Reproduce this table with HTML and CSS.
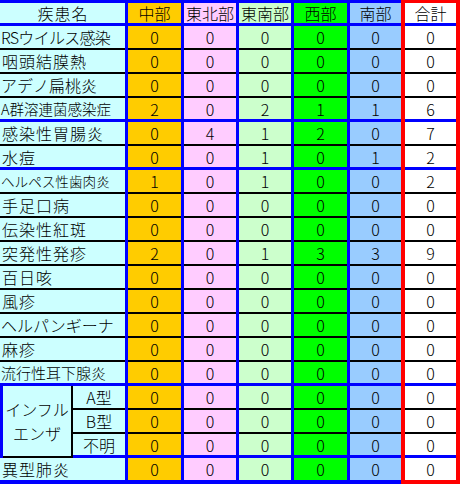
FILE: index.html
```html
<!DOCTYPE html>
<html lang="ja">
<head>
<meta charset="utf-8">
<title>感染症発生状況</title>
<link rel="stylesheet" href="styles.css">
</head>
<body>
<table class="grid">
  <colgroup>
    <col class="w-a"><col class="w-b"><col class="w-c1"><col class="w-c2"><col class="w-c3"><col class="w-c4"><col class="w-c5"><col class="w-tot">
  </colgroup>
  <thead>
    <tr>
      <th class="name head-name" colspan="2">疾患名</th>
      <th class="c1">中部</th><th class="c2">東北部</th><th class="c3">東南部</th><th class="c4">西部</th><th class="c5">南部</th><th class="tot">合計</th>
    </tr>
  </thead>
  <tbody>
    <tr><td class="name tight" colspan="2">RSウイルス感染</td><td class="c1">0</td><td class="c2">0</td><td class="c3">0</td><td class="c4">0</td><td class="c5">0</td><td class="tot">0</td></tr>
    <tr><td class="name wide" colspan="2">咽頭結膜熱</td><td class="c1">0</td><td class="c2">0</td><td class="c3">0</td><td class="c4">0</td><td class="c5">0</td><td class="tot">0</td></tr>
    <tr><td class="name" colspan="2">アデノ扁桃炎</td><td class="c1">0</td><td class="c2">0</td><td class="c3">0</td><td class="c4">0</td><td class="c5">0</td><td class="tot">0</td></tr>
    <tr class="sep"><td class="name fit-s" colspan="2">A群溶連菌感染症</td><td class="c1">2</td><td class="c2">0</td><td class="c3">2</td><td class="c4">1</td><td class="c5">1</td><td class="tot">6</td></tr>
    <tr><td class="name wide" colspan="2">感染性胃腸炎</td><td class="c1">0</td><td class="c2">4</td><td class="c3">1</td><td class="c4">2</td><td class="c5">0</td><td class="tot">7</td></tr>
    <tr class="sep"><td class="name wide" colspan="2">水痘</td><td class="c1">0</td><td class="c2">0</td><td class="c3">1</td><td class="c4">0</td><td class="c5">1</td><td class="tot">2</td></tr>
    <tr><td class="name fit-xs" colspan="2">ヘルペス性歯肉炎</td><td class="c1">1</td><td class="c2">0</td><td class="c3">1</td><td class="c4">0</td><td class="c5">0</td><td class="tot">2</td></tr>
    <tr><td class="name wide" colspan="2">手足口病</td><td class="c1">0</td><td class="c2">0</td><td class="c3">0</td><td class="c4">0</td><td class="c5">0</td><td class="tot">0</td></tr>
    <tr><td class="name wide" colspan="2">伝染性紅斑</td><td class="c1">0</td><td class="c2">0</td><td class="c3">0</td><td class="c4">0</td><td class="c5">0</td><td class="tot">0</td></tr>
    <tr><td class="name wide" colspan="2">突発性発疹</td><td class="c1">2</td><td class="c2">0</td><td class="c3">1</td><td class="c4">3</td><td class="c5">3</td><td class="tot">9</td></tr>
    <tr><td class="name wide" colspan="2">百日咳</td><td class="c1">0</td><td class="c2">0</td><td class="c3">0</td><td class="c4">0</td><td class="c5">0</td><td class="tot">0</td></tr>
    <tr><td class="name wide" colspan="2">風疹</td><td class="c1">0</td><td class="c2">0</td><td class="c3">0</td><td class="c4">0</td><td class="c5">0</td><td class="tot">0</td></tr>
    <tr><td class="name" colspan="2">ヘルパンギーナ</td><td class="c1">0</td><td class="c2">0</td><td class="c3">0</td><td class="c4">0</td><td class="c5">0</td><td class="tot">0</td></tr>
    <tr><td class="name wide" colspan="2">麻疹</td><td class="c1">0</td><td class="c2">0</td><td class="c3">0</td><td class="c4">0</td><td class="c5">0</td><td class="tot">0</td></tr>
    <tr class="sep"><td class="name fit-m" colspan="2">流行性耳下腺炎</td><td class="c1">0</td><td class="c2">0</td><td class="c3">0</td><td class="c4">0</td><td class="c5">0</td><td class="tot">0</td></tr>
    <tr><td class="flu" rowspan="3">インフル<br>エンザ</td><td class="sub">A型</td><td class="c1">0</td><td class="c2">0</td><td class="c3">0</td><td class="c4">0</td><td class="c5">0</td><td class="tot">0</td></tr>
    <tr><td class="sub">B型</td><td class="c1">0</td><td class="c2">0</td><td class="c3">0</td><td class="c4">0</td><td class="c5">0</td><td class="tot">0</td></tr>
    <tr class="sep"><td class="sub">不明</td><td class="c1">0</td><td class="c2">0</td><td class="c3">0</td><td class="c4">0</td><td class="c5">0</td><td class="tot">0</td></tr>
    <tr class="last"><td class="name wide" colspan="2">異型肺炎</td><td class="c1">0</td><td class="c2">0</td><td class="c3">0</td><td class="c4">0</td><td class="c5">0</td><td class="tot">0</td></tr>
  </tbody>
</table>
</body>
</html>
```
FILE: styles.css
```css
html, body {
  margin: 0;
  padding: 0;
  background: #fff;
}

.grid {
  border-collapse: separate;
  border-spacing: 0;
  table-layout: fixed;
  width: 460px;
  font-family: "Noto Sans CJK JP", "Noto Sans", sans-serif;
  font-size: 16px;
  color: #000;
}

.w-a { width: 73px; }
.w-b { width: 55px; }
.w-c1 { width: 56px; }
.w-c2 { width: 55px; }
.w-c3 { width: 55px; }
.w-c4 { width: 56px; }
.w-c5 { width: 51px; }
.w-tot { width: 59px; }

.grid th,
.grid td {
  box-sizing: border-box;
  height: 24px;
  padding: 0 0 2px 0;
  border: 0;
  border-right: 3px solid #0000ff;
  box-shadow: inset 0 -2px 0 #000;
  text-align: center;
  vertical-align: middle;
  font-weight: 300;
  line-height: 20px;
  white-space: nowrap;
}

.grid th {
  height: 26px;
  border-top: 3px solid #0000ff;
  padding-bottom: 3px;
  box-shadow: inset 0 -3px 0 #0000ff;
}

.grid th.head-name {
  text-align: center;
  letter-spacing: 1px;
  padding-left: 1px;
}

.grid tr.sep td {
  padding-bottom: 3px;
  box-shadow: inset 0 -3px 0 #0000ff;
}

.grid tr.last td {
  height: 26px;
  padding-bottom: 0;
  box-shadow: none;
  border-bottom: 4px solid #0000ff;
}

.name {
  background: #ccffff;
  border-left: 3px solid #0000ff;
}

.grid td.name {
  text-align: left;
  padding-left: 1px;
}

.grid td.wide { letter-spacing: 1px; padding-left: 2px; }
.grid td.tight { letter-spacing: -0.7px; }
.grid td.fit-s { font-size: 14.5px; }
.grid td.fit-xs { font-size: 13.6px; }
.grid td.fit-m { font-size: 15px; }

.grid td.flu {
  background: #ccffff;
  border-left: 3px solid #0000ff;
  border-right: 2px solid #000;
  line-height: 24px;
  white-space: normal;
}

.sub { background: #ccffff; }

.c1 { background: #ffcc00; }
.c2 { background: #ffccff; }
.c3 { background: #ccffcc; }
.c4 { background: #00ff00; }

.grid .c5 {
  background: #99ccff;
  border-right: 0;
}

.grid .tot {
  background: #fff;
  border-left: 4px solid #ff0000;
  border-right: 4px solid #ff0000;
}

.grid th.tot {
  border-top-color: #ff0000;
}

.grid tr.last td.tot {
  border-bottom-color: #ff0000;
}
```
